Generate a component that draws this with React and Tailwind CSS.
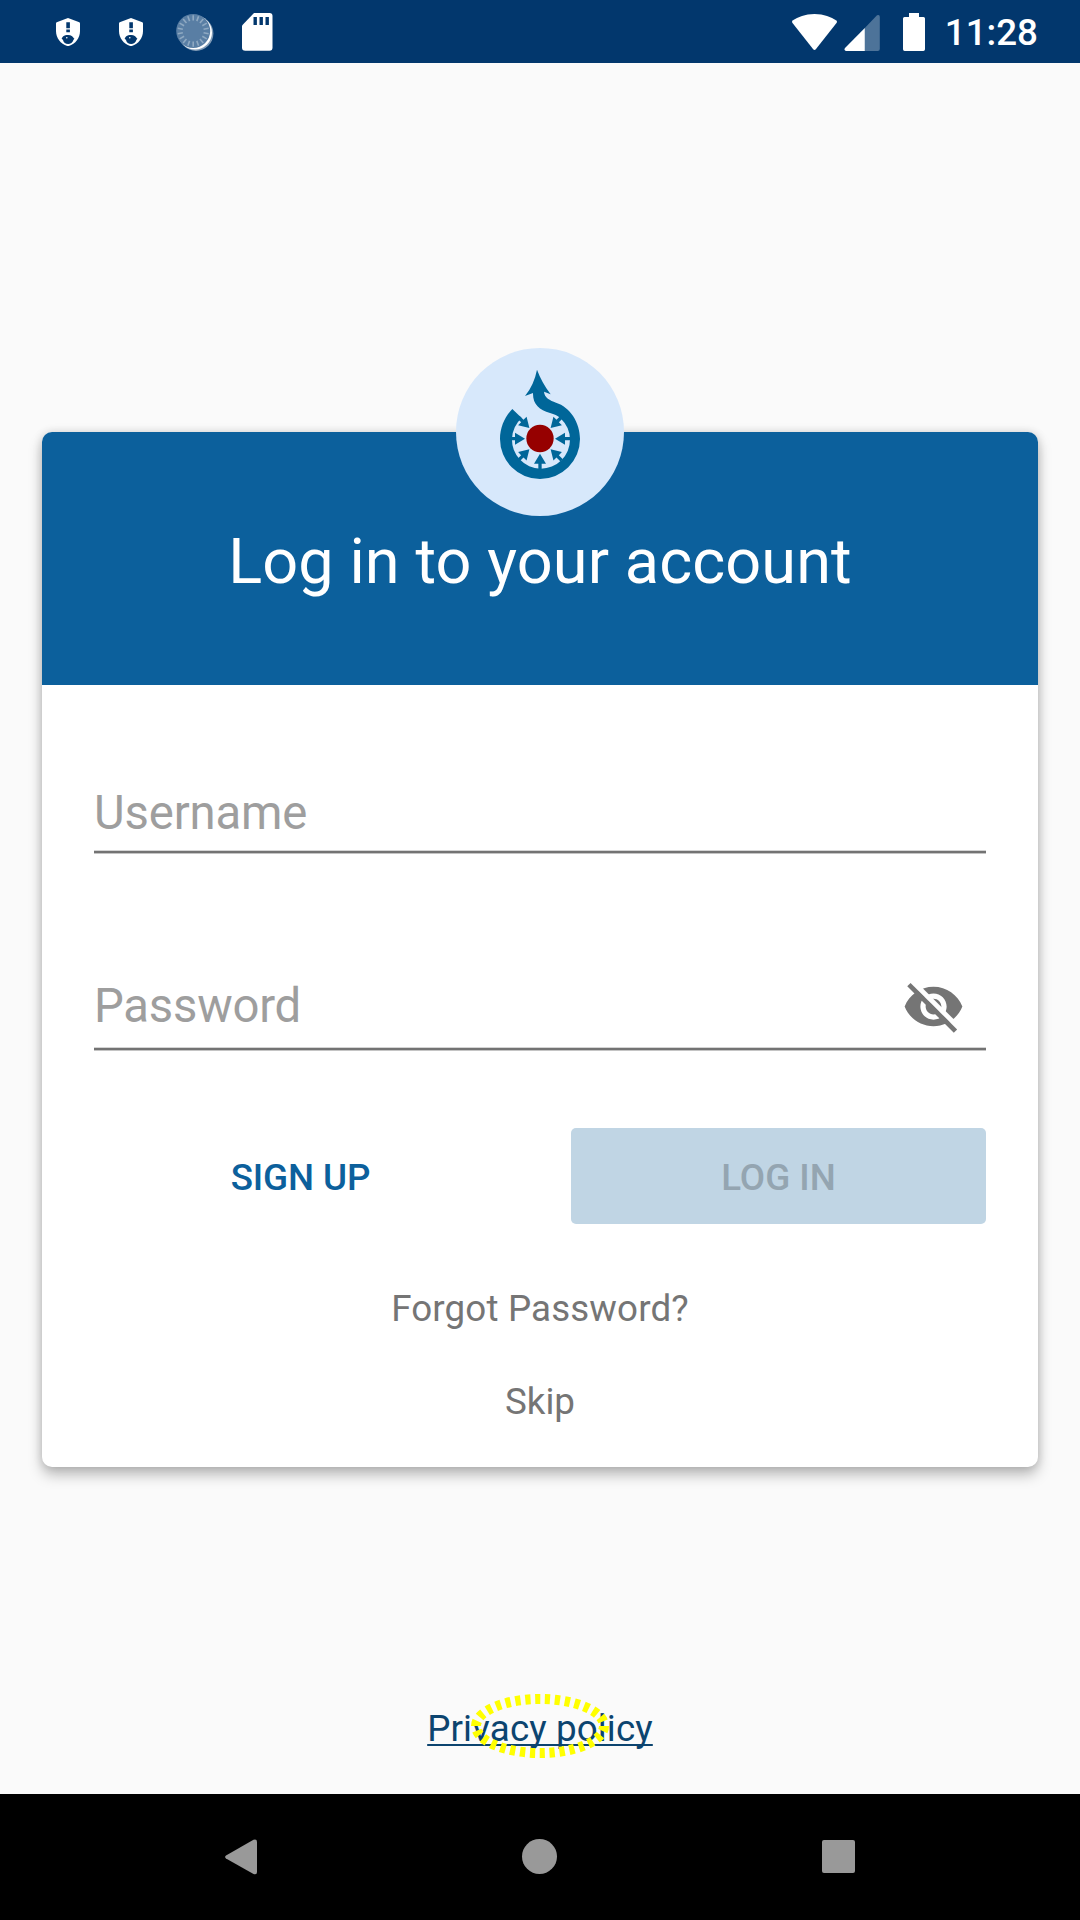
const TICKS = [0, 20, 40, 60, 80, 100, 120, 140, 160, 180, 200, 220, 240, 260, 280, 300, 320, 340];
const ARROWS = [0, 45, 90, 135, 180, 225, 315];

function ShieldIcon() {
  return (
    <svg className="h-7 w-6" viewBox="0 0 24 28" fill="none">
      <path d="M12 0 23.3 4.2Q24 4.5 24 5.2V13C24 20 19.5 25.8 12.8 28H11.2C4.5 25.8 0 20 0 13V5.2Q0 4.5.7 4.2Z" fill="#fff" />
      <path d="M10.3 4.2h3.6v6h-3.6zM10.3 11.5h3.6v2.7h-3.6z" fill="#02376d" />
      <path d="M5.6 20.6 7 18.6C8.4 17.4 10.2 17 12.2 17c3 0 4.6 1.4 5.6 3.2l.6.4-1 1.3C16.6 24.4 14.5 26 12.2 26c-2.8 0-4.6-1.6-5.2-4Z" fill="#02376d" />
      <circle cx="10.8" cy="19.8" r=".8" fill="#fff" />
    </svg>
  );
}

function SpinnerIcon() {
  return (
    <svg className="h-[38px] w-[38px]" viewBox="0 0 38 38">
      <circle cx="20" cy="20.5" r="17.4" fill="#7f9ab6" />
      <circle cx="19" cy="19.5" r="17" fill="#fff" />
      <circle cx="17.2" cy="18" r="17" fill="#597ea4" />
      <g stroke="#8fa9c2" strokeWidth="1.6">
        {TICKS.map((a) => (
          <path key={a} d="M17.2 2.3v5.2" transform={`rotate(${a} 17.2 18)`} />
        ))}
      </g>
    </svg>
  );
}

function SdIcon() {
  return (
    <svg className="h-[38px] w-[31px]" viewBox="0 0 31 38">
      <path d="M12 0H27.5Q30.5 0 30.5 3V34.5Q30.5 37.8 27.5 37.8H3.3Q0 37.8 0 34.5V12.5Z" fill="#fff" />
      <path d="M11.5 4h3.4v8h-3.4zM17.5 4h3.4v8h-3.4zM23.5 4h3.4v8h-3.4z" fill="#02376d" />
    </svg>
  );
}

function StatusBar() {
  return (
    <header className="flex h-[63px] items-center bg-[#02376d] pr-[42px] pl-14 text-white">
      <div className="flex items-center">
        <ShieldIcon />
        <div className="ml-[39px] flex"><ShieldIcon /></div>
        <div className="ml-[33px] flex"><SpinnerIcon /></div>
        <div className="ml-[28px] flex"><SdIcon /></div>
      </div>
      <div className="ml-auto flex items-center">
        <svg className="h-[38px] w-[134px]" viewBox="0 0 134 38">
          <path d="M23.5 .9C33 .9 40 4 45.3 7.5Q46.5 8.500 45.7 9.8L25 36Q23.5 37.8 22 36L1.3 9.8Q.5 8.5 1.7 7.5C7 4 14 .9 23.5 .9Z" fill="#fff" />
          <path d="M86 2.3Q88.8 1 88.8 4V36Q88.8 38 86.8 38H73.8V15Z" fill="#4d7399" />
          <path d="M73.8 15V38H55Q52.5 37.2 54 35Z" fill="#fff" />
          <path d="M118 0h10v4h4.5q1.500 0 1.500 1.500V36.300q0 1.700-1.700 1.700H113.700q-1.700 0-1.700-1.700V5.500q0-1.500 1.500-1.500H118Z" fill="#fff" />
        </svg>
        <span className="ml-[20px] pt-[3px] text-[36.750px] leading-[44px] font-medium">11:28</span>
      </div>
    </header>
  );
}

function Logo() {
  return (
    <svg className="size-[168px]" viewBox="48 39 504 504">
      <circle cx="300" cy="291" r="252" fill="#d7e8fb" />
      <path
        fill="#006699"
        d="M217 222 245 249A87 87 0 1 0 363 251C352 241 343 238 330 234C298 225 278 208 279 174L255 183Q282 150 291 104Q305 142 332 178L312 170C313 188 330 196 348 203C390 216 420 262 420 312A120 120 0 0 1 180 312C180 276 196 243 217 222Z"
      />
      <g fill="#006699">
        {ARROWS.map((a) => (
          <path key={a} d="M392 306H375V293L345 311 375 329V316H392Z" transform={`rotate(${a} 300 311)`} />
        ))}
      </g>
      <circle cx="300" cy="310.5" r="41" fill="#960000" />
    </svg>
  );
}

function HiddenEyeIcon() {
  return (
    <svg className="size-[63px]" viewBox="0 0 24 24">
      <defs>
        <mask id="eye-slash">
          <path d="M0 0h24v24H0z" fill="#fff" />
          <path d="M4.6 3.1 22 20.5" stroke="#000" strokeWidth="1.9" />
        </mask>
      </defs>
      <path
        mask="url(#eye-slash)"
        d="M12 4.5C7 4.5 2.73 7.61 1 12c1.73 4.39 6 7.5 11 7.5s9.27-3.11 11-7.5c-1.73-4.39-6-7.5-11-7.5zM12 17c-2.76 0-5-2.24-5-5s2.24-5 5-5 5 2.24 5 5-2.24 5-5 5zm0-8c-1.66 0-3 1.34-3 3s1.34 3 3 3 3-1.34 3-3-1.34-3-3-3z"
        fill="#757575"
      />
      <path d="M3.27 3 2 4.27 19.73 22 21 20.73Z" fill="#757575" />
    </svg>
  );
}

function Underline() {
  return <div className="h-1 border-y border-t-[#d4d4d4] border-b-[#c4c4c4] bg-[#737373]" />;
}

export default function App() {
  return (
    <div className="flex h-[1920px] w-[1080px] flex-col overflow-hidden bg-[#fafafa] font-[Roboto,sans-serif]">
      <StatusBar />
      <main className="flex flex-1 flex-col items-center pt-[285px]">
        <div className="z-10 -mb-[84px]"><Logo /></div>
        <section className="h-[1035px] w-[996px] rounded-[10px] bg-white shadow-[0_8px_14px_rgba(0,0,0,0.25),0_0_10px_rgba(0,0,0,0.14)]">
          <div className="h-[253px] rounded-t-[10px] bg-[#0c609c] pt-[88px]">
            <h1 className="text-center text-[63px] leading-[84px] tracking-[0.1px] text-white">Log in to your account</h1>
          </div>
          <form className="px-[52px]">
            <div className="flex h-[165px] items-end pb-[7px] text-[47.250px] leading-[60px] tracking-[-0.15px] text-[#9e9e9e]">Username</div>
            <Underline />
            <div className="flex h-[193px] items-end justify-between text-[47.250px] leading-[60px] tracking-[-0.22px] text-[#9e9e9e]">
              <span className="pb-[11px]">Password</span>
              <div className="mr-[21px] pb-[9px]"><HiddenEyeIcon /></div>
            </div>
            <Underline />
            <div className="mt-[77px] flex justify-between text-[36.750px] font-medium">
              <button type="button" className="h-24 w-[413px] pt-[3px] tracking-[-0.1px] text-[#0c609c]">SIGN UP</button>
              <button type="button" className="h-24 w-[415px] rounded-[5px] bg-[#c0d5e4] pt-[3px] text-[#94a5b1]">LOG IN</button>
            </div>
            <div className="mt-[61px] text-center text-[36.750px] leading-[48px] tracking-[0.14px] text-[#757575]">Forgot Password?</div>
            <div className="mt-[45px] text-center text-[36.750px] leading-[48px] text-[#757575]">Skip</div>
          </form>
        </section>
        <div className="relative mt-[238px] flex h-[48px] items-center">
          <a className="text-[36.750px] leading-[48px] tracking-[0.12px] text-[#0c446f] underline decoration-2 underline-offset-[3px] [text-decoration-skip-ink:none]">Privacy policy</a>
          <svg className="absolute top-[-13px] left-1/2 h-[68px] w-[142px] -translate-x-1/2" viewBox="0 0 142 68" fill="none">
            <ellipse cx="71" cy="34" rx="64" ry="27" stroke="#ffff00" strokeWidth="10" pathLength="300" strokeDasharray="5.3 4.7" />
          </svg>
        </div>
      </main>
      <nav className="flex h-[126px] items-center justify-between bg-black px-[225px] pb-px">
        <svg className="h-9 w-8" viewBox="0 0 32 36"><path d="M1 16.5 28.500 .8Q32 -.3 32 3V33Q32 36.3 28.5 35L1 19.5Q-.8 18 1 16.500Z" fill="#999" /></svg>
        <div className="size-[35px] rounded-full bg-[#999]" />
        <div className="size-[33px] rounded-[2px] bg-[#999]" />
      </nav>
    </div>
  );
}
